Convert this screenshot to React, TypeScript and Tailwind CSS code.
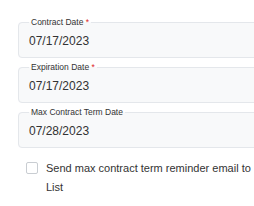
import React from "react";

const fields = [
  { label: "Contract Date", value: "07/17/2023", required: true },
  { label: "Expiration Date", value: "07/17/2023", required: true },
  { label: "Max Contract Term Date", value: "07/28/2023", required: false },
];

export default function App() {
  return (
    <div
      className="h-[206px] w-[254px] overflow-hidden bg-white text-[#333]"
      style={{ fontFamily: '"Liberation Sans", Arial, sans-serif' }}
    >
      <div className="w-[270px] pl-[18px] pt-[17px]">
        <div className="flex flex-col gap-[4px]">
          {fields.map((f) => (
            <DateField key={f.label} {...f} />
          ))}
        </div>

        <label className="mt-[11px] flex items-start gap-[8px] pl-[8px]">
          <span className="mt-[3px] block h-[12px] w-[12px] shrink-0 rounded-[2px] border border-[#c9cdd2] bg-white" />
          <span className="w-[212px] text-[11px] leading-[19px] text-[#333]">
            Send max contract term reminder email to List
          </span>
        </label>
      </div>
    </div>
  );
}

function DateField({ label, value, required }: { label: string; value: string; required: boolean }) {
  return (
    <fieldset className="rounded-[4px] border border-[#e4e7eb] bg-[#f8f9fa] px-[10px] pb-[8px]">
      <legend className="px-[2px] text-[8.5px] leading-[10px] text-[#333]">
        {label}
        {required && <span className="text-[#dc2626]"> *</span>}
      </legend>
      <div className="mt-[6px] text-[12px] leading-[16px] text-[#333]">{value}</div>
    </fieldset>
  );
}
